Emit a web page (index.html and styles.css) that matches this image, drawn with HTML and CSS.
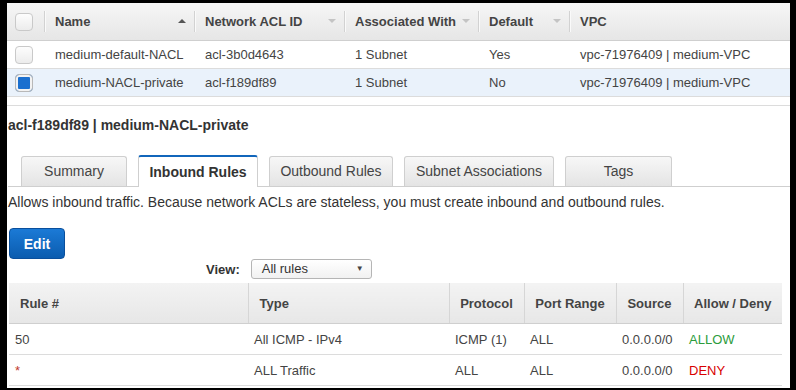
FILE: index.html
```
<!DOCTYPE html>
<html lang="en">
<head>
    <meta charset="UTF-8">
    <title>Network ACLs</title>
    <link rel="stylesheet" href="styles.css">
</head>
<body>
    <div class="frame">
        <table class="acl-list">
            <colgroup>
                <col style="width:37px">
                <col style="width:150px">
                <col style="width:150px">
                <col style="width:134px">
                <col style="width:91px">
                <col>
            </colgroup>
            <thead>
                <tr>
                    <th class="check-col"><span class="checkbox"></span></th>
                    <th class="sep">Name <span class="sort up"></span></th>
                    <th class="sep">Network ACL ID <span class="sort down"></span></th>
                    <th class="sep">Associated With <span class="sort down"></span></th>
                    <th class="sep">Default <span class="sort down"></span></th>
                    <th class="sep">VPC</th>
                </tr>
            </thead>
            <tbody>
                <tr>
                    <td class="check-col"><span class="checkbox"></span></td>
                    <td>medium-default-NACL</td>
                    <td>acl-3b0d4643</td>
                    <td>1 Subnet</td>
                    <td>Yes</td>
                    <td>vpc-71976409 | medium-VPC</td>
                </tr>
                <tr class="selected">
                    <td class="check-col"><span class="checkbox checked"></span></td>
                    <td>medium-NACL-private</td>
                    <td>acl-f189df89</td>
                    <td>1 Subnet</td>
                    <td>No</td>
                    <td>vpc-71976409 | medium-VPC</td>
                </tr>
            </tbody>
        </table>

        <div class="detail">
            <h2 class="detail-title">acl-f189df89 | medium-NACL-private</h2>

            <ul class="tabs">
                <li class="tab tab-summary">Summary</li>
                <li class="tab tab-inbound active">Inbound Rules</li>
                <li class="tab tab-outbound">Outbound Rules</li>
                <li class="tab tab-subnets">Subnet Associations</li>
                <li class="tab tab-tags">Tags</li>
            </ul>

            <p class="tab-desc">Allows inbound traffic. Because network ACLs are stateless, you must create inbound and outbound rules.</p>

            <button class="btn-edit">Edit</button>

            <div class="view-filter">
                <span class="view-label">View:</span>
                <div class="select">All rules <span class="select-arrow">&#9660;</span></div>
            </div>

            <table class="rules">
                <colgroup>
                    <col style="width:239px">
                    <col style="width:201px">
                    <col style="width:75px">
                    <col style="width:92px">
                    <col style="width:67px">
                    <col>
                </colgroup>
                <thead>
                    <tr>
                        <th class="left">Rule #</th>
                        <th class="left">Type</th>
                        <th>Protocol</th>
                        <th>Port Range</th>
                        <th>Source</th>
                        <th>Allow / Deny</th>
                    </tr>
                </thead>
                <tbody>
                    <tr>
                        <td>50</td>
                        <td>All ICMP - IPv4</td>
                        <td>ICMP (1)</td>
                        <td>ALL</td>
                        <td>0.0.0.0/0</td>
                        <td class="allow">ALLOW</td>
                    </tr>
                    <tr>
                        <td class="star">*</td>
                        <td>ALL Traffic</td>
                        <td>ALL</td>
                        <td>ALL</td>
                        <td>0.0.0.0/0</td>
                        <td class="deny">DENY</td>
                    </tr>
                </tbody>
            </table>
        </div>
    </div>
</body>
</html>
```

FILE: styles.css
```
:root {
    --text: #444;
    --line: #dcdcdc;
    --head-top: #f6f6f6;
    --head-bottom: #e6e6e6;
    --blue: #1166bb;
}
body {
    margin: 0;
    background: #000;
    font-family: "Liberation Sans", Arial, sans-serif;
    font-size: 13px;
    color: var(--text);
}
.frame {
    margin: 3px 6px 0 7px;
    height: 385px;
    background: #fff;
    overflow: hidden;
}

/* top list */
.acl-list {
    width: 100%;
    border-collapse: collapse;
    table-layout: fixed;
}
.acl-list th {
    height: 37px;
    padding: 0 8px 0 11px;
    text-align: left;
    font-weight: bold;
    color: var(--text);
    background: linear-gradient(var(--head-top), var(--head-bottom));
    border-bottom: 1px solid #cfcfcf;
    white-space: nowrap;
}
.acl-list th.sep {
    background:
        linear-gradient(#d2d2d2, #d2d2d2) 0 8px / 1px 21px no-repeat,
        linear-gradient(#fafafa, #fafafa) 1px 8px / 1px 21px no-repeat,
        linear-gradient(var(--head-top), var(--head-bottom));
}
.acl-list td {
    height: 27px;
    padding: 0 8px 0 11px;
    border-bottom: 1px solid var(--line);
    white-space: nowrap;
}
.acl-list .check-col {
    padding: 0 0 0 8px;
}
.acl-list tr.selected td {
    background: #eaf2fb;
}
.checkbox {
    display: block;
    width: 16px;
    height: 16px;
    border: 1px solid #c9c9c9;
    border-radius: 4px;
    background: linear-gradient(#fdfdfd, #ececec);
}
.checkbox.checked {
    background: #1a6fcf;
    box-shadow: inset 0 0 0 2px #f2f2f2;
    border-color: #b8b8b8;
}
.sort {
    float: right;
    width: 0;
    height: 0;
    margin-top: 5px;
    border-left: 4px solid transparent;
    border-right: 4px solid transparent;
}
.sort.up {
    border-bottom: 4px solid #555;
}
.sort.down {
    border-top: 4px solid #c4c4c4;
}

/* detail pane */
.detail {
    margin-top: 8px;
    border-top: 1px solid var(--line);
    padding-left: 1px;
}
.detail-title {
    margin: 11px 0 0;
    font-size: 14px;
    line-height: 16px;
    font-weight: bold;
    color: #333;
}
.tabs {
    list-style: none;
    margin: 21px 0 0;
    padding: 0 0 0 13px;
    display: flex;
    align-items: flex-end;
    gap: 11px;
    border-bottom: 1px solid #cfcfcf;
    height: 32px;
}
.tab {
    height: 29px;
    line-height: 29px;
    text-align: center;
    font-size: 14px;
    color: var(--text);
    border: 1px solid #cfcfcf;
    border-bottom: none;
    border-radius: 3px 3px 0 0;
    background: linear-gradient(#f7f7f7, #e4e4e4);
}
.tab.active {
    height: 30px;
    line-height: 30px;
    margin-bottom: -1px;
    border-top: 2px solid var(--blue);
    background: #fff;
    font-weight: bold;
    color: #333;
}
.tab-summary { width: 104px; }
.tab-inbound { width: 118px; }
.tab-outbound { width: 122px; }
.tab-subnets { width: 148px; }
.tab-tags { width: 105px; }

.tab-desc {
    margin: 7px 0 0;
    font-size: 14px;
    line-height: 16px;
    color: #333;
}
.btn-edit {
    display: block;
    margin: 18px 0 0 1px;
    width: 56px;
    height: 31px;
    padding: 0;
    font-family: inherit;
    font-size: 14px;
    font-weight: bold;
    color: #fff;
    background: linear-gradient(#1b7ad6, #0b5caf);
    border: 1px solid #0a4f9c;
    border-radius: 4px;
}
.view-filter {
    display: flex;
    align-items: center;
    gap: 11px;
    margin-left: 198px;
    height: 20px;
}
.view-label {
    font-weight: bold;
    color: #333;
}
.select {
    width: 109px;
    height: 18px;
    line-height: 18px;
    padding-left: 10px;
    border: 1px solid #b5b5b5;
    border-radius: 3px;
    background: linear-gradient(#fff, #f1f1f1);
    color: #333;
    display: flex;
    justify-content: space-between;
}
.select-arrow {
    font-size: 8px;
    padding-right: 7px;
    color: #444;
}

/* rules table */
.rules {
    margin: 4px 0 0 1px;
    width: 773px;
    border-collapse: collapse;
    table-layout: fixed;
}
.rules th {
    height: 40px;
    padding: 0;
    font-weight: bold;
    text-align: center;
    color: var(--text);
    background: linear-gradient(#f3f3f3, #e7e7e7);
    border-bottom: 1px solid #cfcfcf;
    border-left: 1px solid #d6d6d6;
}
.rules th:first-child {
    border-left: none;
}
.rules th.left {
    text-align: left;
    padding-left: 11px;
}
.rules td {
    height: 30px;
    padding: 0 6px;
    border-bottom: 1px solid var(--line);
    white-space: nowrap;
}
.rules td:first-child {
    padding-left: 6px;
}
.rules td.star {
    color: #c0392b;
}
.allow {
    color: #2c9c3c;
}
.deny {
    color: #d80000;
}
```
